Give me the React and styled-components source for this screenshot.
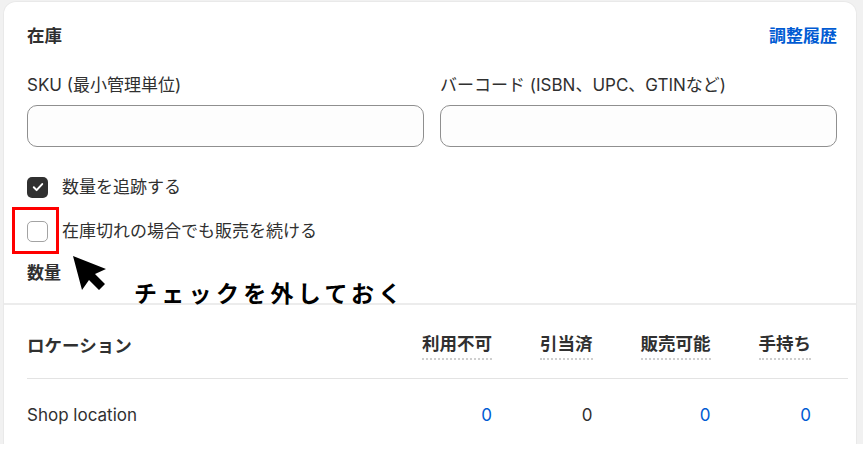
import styled, { createGlobalStyle } from "styled-components"

const GlobalStyle = createGlobalStyle`
  html, body {
    margin: 0;
    padding: 0;
    background: #ffffff;
  }
  body {
    font-family: "Inter", "Noto Sans CJK JP", sans-serif;
    color: #303030;
  }
`

// 背景のグレー領域
const Frame = styled.div`
  height: 444px;
  background: #f1f1f1;
  padding: 2px 7px 0 4px;
  box-sizing: border-box;
  overflow: hidden;
`

const Card = styled.div`
  position: relative;
  height: 100%;
  background: #ffffff;
  border-radius: 12px 12px 0 0;
  box-shadow: 0 0 0 1px rgba(0, 0, 0, 0.03);
`

const Section = styled.div`
  padding: 22px 19px 18px 23px;
`

const TableSection = styled.div`
  border-top: 2px solid #ececec;
  padding: 27px 8px 0 23px;
`

const HeaderRow = styled.div`
  display: flex;
  justify-content: space-between;
  align-items: center;
  height: 24px;
`

const Title = styled.h2`
  margin: 0;
  font-size: 17.5px;
  font-weight: 700;
  line-height: 24px;
`

const Link = styled.a`
  font-size: 17px;
  font-weight: 600;
  line-height: 24px;
  color: #005bd3;
  text-decoration: none;
`

const Fields = styled.div`
  display: grid;
  grid-template-columns: 1fr 1fr;
  gap: 16px;
  margin-top: 25px;
`

const Field = styled.label`
  display: flex;
  flex-direction: column;
  gap: 8px;
`

const Label = styled.span`
  font-size: 17px;
  line-height: 24px;
`

const Input = styled.input`
  height: 42px;
  box-sizing: border-box;
  border: 1px solid #8f8f8f;
  border-radius: 10px;
  background: #fdfdfd;
  padding: 0 12px;
  font-size: 17px;
  font-family: inherit;
`

const Checks = styled.div`
  display: flex;
  flex-direction: column;
  gap: 20px;
  margin-top: 28px;
`

const CheckRow = styled.div`
  display: flex;
  align-items: center;
  gap: 14px;
  height: 24px;
`

const Box = styled.span`
  width: 21px;
  height: 21px;
  box-sizing: border-box;
  border-radius: 5px;
  display: flex;
  align-items: center;
  justify-content: center;
  background: ${(p) => (p.$checked ? "#303030" : "#ffffff")};
  border: ${(p) => (p.$checked ? "none" : "1.5px solid #a3a3a3")};
`

const SubTitle = styled.h3`
  margin: 18px 0 0;
  font-size: 17px;
  font-weight: 700;
  line-height: 24px;
`

const Table = styled.table`
  width: 100%;
  border-collapse: collapse;
  font-size: 17px;
  line-height: 24px;
`

const Th = styled.th`
  width: ${(p) => (p.$first ? "100%" : "auto")};
  padding: 0 0 18px ${(p) => (p.$first ? "0" : "48px")};
  padding-right: ${(p) => (p.$last ? "37px" : "0")};
  text-align: ${(p) => (p.$first ? "left" : "right")};
  font-size: 17.5px;
  font-weight: 700;
  border-bottom: 1px solid #e3e3e3;
  white-space: nowrap;
`

const Dotted = styled.span`
  display: inline-block;
  border-bottom: 2px dotted #cfcfcf;
  padding-bottom: 2px;
  line-height: 24px;
`

const Td = styled.td`
  padding: 24px 0 0 ${(p) => (p.$first ? "0" : "48px")};
  padding-right: ${(p) => (p.$last ? "37px" : "0")};
  text-align: ${(p) => (p.$first ? "left" : "right")};
  color: ${(p) => (p.$link ? "#005bd3" : "#303030")};
  white-space: nowrap;
`

// 注釈（赤枠・矢印・テキスト）
const RedBox = styled.div`
  position: absolute;
  left: 8px;
  top: 205px;
  width: 47px;
  height: 47px;
  box-sizing: border-box;
  border: 3px solid #ff0000;
`

const Arrow = styled.svg`
  position: absolute;
  left: 66px;
  top: 250px;
`

const Note = styled.div`
  position: absolute;
  left: 130px;
  top: 275px;
  font-family: "Noto Sans CJK JP", sans-serif;
  font-size: 23px;
  font-weight: 700;
  line-height: 30px;
  letter-spacing: 4.3px;
  color: #000000;
`

const Check = () => (
  <svg width="14" height="14" viewBox="0 0 14 14">
    <path d="M2.8 7.3l2.8 2.8 5.6-6" fill="none" stroke="#fff" strokeWidth="2" strokeLinecap="round" strokeLinejoin="round" />
  </svg>
)

const columns = [
  { label: "利用不可", value: 0, link: true },
  { label: "引当済", value: 0, link: false },
  { label: "販売可能", value: 0, link: true },
  { label: "手持ち", value: 0, link: true },
]

export default function App() {
  return (
    <>
      <GlobalStyle />
      <Frame>
        <Card>
          <Section>
            <HeaderRow>
              <Title>在庫</Title>
              <Link href="#">調整履歴</Link>
            </HeaderRow>
            <Fields>
              <Field>
                <Label>SKU (最小管理単位)</Label>
                <Input type="text" />
              </Field>
              <Field>
                <Label>バーコード (ISBN、UPC、GTINなど)</Label>
                <Input type="text" />
              </Field>
            </Fields>
            <Checks>
              <CheckRow>
                <Box $checked>
                  <Check />
                </Box>
                <Label>数量を追跡する</Label>
              </CheckRow>
              <CheckRow>
                <Box />
                <Label>在庫切れの場合でも販売を続ける</Label>
              </CheckRow>
            </Checks>
            <SubTitle>数量</SubTitle>
          </Section>

          <TableSection>
            <Table>
              <thead>
                <tr>
                  <Th $first>ロケーション</Th>
                  {columns.map((c, i) => (
                    <Th key={c.label} $last={i === columns.length - 1}>
                      <Dotted>{c.label}</Dotted>
                    </Th>
                  ))}
                </tr>
              </thead>
              <tbody>
                <tr>
                  <Td $first>Shop location</Td>
                  {columns.map((c, i) => (
                    <Td key={c.label} $link={c.link} $last={i === columns.length - 1}>
                      {c.value}
                    </Td>
                  ))}
                </tr>
              </tbody>
            </Table>
          </TableSection>

          <RedBox />
          <Arrow width="42" height="42" viewBox="0 0 42 42">
            <polygon points="3,4 12,38 19,28 29,38 35,32 25,22 36,17" fill="#000" />
          </Arrow>
          <Note>チェックを外しておく</Note>
        </Card>
      </Frame>
    </>
  )
}
